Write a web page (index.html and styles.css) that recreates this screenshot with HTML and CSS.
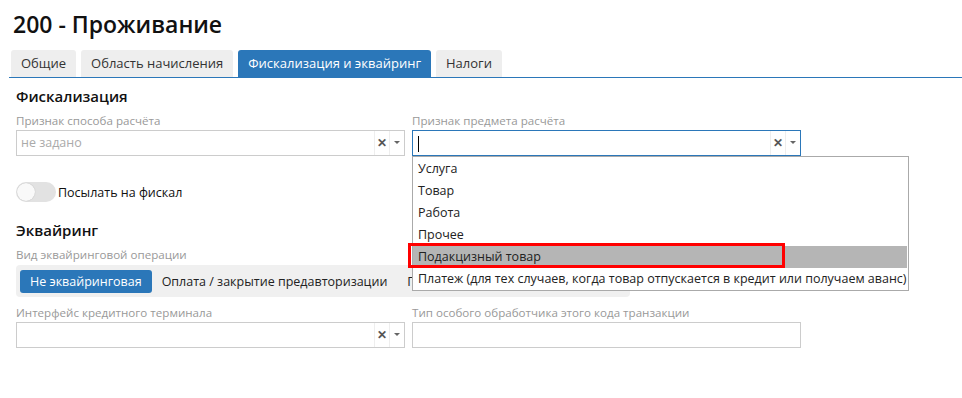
FILE: index.html
```html
<!DOCTYPE html>
<html lang="ru">
<head>
    <meta charset="UTF-8">
    <title>200 - Проживание</title>
    <link rel="stylesheet" href="styles.css">
</head>
<body>
    <div class="page">
        <h1 class="title">200 - Проживание</h1>

        <ul class="tabs">
            <li class="tab">Общие</li>
            <li class="tab">Область начисления</li>
            <li class="tab active">Фискализация и эквайринг</li>
            <li class="tab">Налоги</li>
        </ul>

        <div class="content">
            <h2 class="section-title">Фискализация</h2>
            <div class="form-row">
                <div class="field">
                    <label class="field-label">Признак способа расчёта</label>
                    <div class="combo">
                        <span class="combo-value placeholder">не задано</span>
                        <span class="combo-clear">&#x2715;</span>
                        <span class="combo-arrow"></span>
                    </div>
                </div>
                <div class="field dropdown-host">
                    <label class="field-label">Признак предмета расчёта</label>
                    <div class="combo focused">
                        <span class="combo-value"><span class="caret"></span></span>
                        <span class="combo-clear">&#x2715;</span>
                        <span class="combo-arrow"></span>
                    </div>
                    <ul class="dropdown">
                        <li>Услуга</li>
                        <li>Товар</li>
                        <li>Работа</li>
                        <li>Прочее</li>
                        <li class="hover">Подакцизный товар</li>
                        <li>Платеж (для тех случаев, когда товар отпускается в кредит или получаем аванс)</li>
                    </ul>
                    <div class="mark"></div>
                </div>
            </div>

            <div class="switch-row">
                <span class="switch"><span class="knob"></span></span>
                <span class="switch-text">Посылать на фискал</span>
            </div>

            <h2 class="section-title acq">Эквайринг</h2>
            <label class="field-label">Вид эквайринговой операции</label>
            <div class="segments">
                <span class="segment active">Не эквайринговая</span>
                <span class="segment">Оплата / закрытие предавторизации</span>
                <span class="segment">Предавторизация</span>
            </div>

            <div class="form-row terminal-row">
                <div class="field">
                    <label class="field-label">Интерфейс кредитного терминала</label>
                    <div class="combo">
                        <span class="combo-value"></span>
                        <span class="combo-clear">&#x2715;</span>
                        <span class="combo-arrow"></span>
                    </div>
                </div>
                <div class="field">
                    <label class="field-label">Тип особого обработчика этого кода транзакции</label>
                    <div class="text-input"></div>
                </div>
            </div>
        </div>
    </div>
</body>
</html>
```

FILE: styles.css
```css
* {
    box-sizing: border-box;
    margin: 0;
    padding: 0;
}

body {
    font-family: 'Open Sans', 'Noto Sans', sans-serif;
    background-color: #ffffff;
    color: #222222;
    font-size: 12.5px;
}

.page {
    padding-top: 9px;
}

.title {
    font-size: 23px;
    font-weight: 600;
    line-height: 30px;
    margin-left: 13px;
    color: #111111;
}

.tabs {
    list-style: none;
    display: flex;
    gap: 5px;
    margin: 11px 0 0 9px;
    padding-left: 2px;
    border-bottom: 1px solid #2b77b9;
}

.tab {
    height: 27px;
    line-height: 27px;
    padding: 0 10px;
    background-color: #eeeeee;
    border-radius: 3px 3px 0 0;
    font-size: 13px;
    color: #333333;
}

.tab.active {
    background-color: #2b77b9;
    color: #ffffff;
}

.content {
    padding: 0 0 0 16px;
}

.section-title {
    font-size: 15px;
    font-weight: 600;
    line-height: 20px;
    margin-top: 8px;
    color: #111111;
}

.section-title.acq {
    margin-top: 18px;
}

.form-row {
    display: flex;
    gap: 7px;
}

.terminal-row {
    margin-top: 1px;
}

.field {
    width: 389px;
}

.field-label {
    display: block;
    font-size: 11.6px;
    line-height: 16px;
    color: #999999;
    margin-top: 7px;
    margin-bottom: 1px;
}

.combo {
    display: flex;
    height: 26px;
    border: 1px solid #cccccc;
    background-color: #ffffff;
}

.combo.focused {
    border-color: #2b77b9;
}

.combo-value {
    flex: 1;
    padding-left: 4px;
    line-height: 24px;
    font-size: 12.5px;
    color: #222222;
}

.combo-value.placeholder {
    color: #aaaaaa;
}

.caret {
    display: inline-block;
    width: 1px;
    height: 16px;
    background-color: #000000;
    vertical-align: middle;
    margin-left: 1px;
}

.combo-clear {
    width: 15px;
    border-left: 1px solid #eeeeee;
    text-align: center;
    line-height: 24px;
    font-size: 12px;
    font-weight: 700;
    color: #555555;
}

.combo-arrow {
    width: 15px;
    border-left: 1px solid #eeeeee;
    position: relative;
}

.combo-arrow::after {
    content: "";
    position: absolute;
    left: 4px;
    top: 10px;
    border-left: 3px solid transparent;
    border-right: 3px solid transparent;
    border-top: 3px solid #666666;
}

.text-input {
    height: 26px;
    border: 1px solid #cccccc;
}

.dropdown-host {
    position: relative;
}

.dropdown {
    position: absolute;
    left: 0;
    top: 50px;
    width: 497px;
    list-style: none;
    background-color: #ffffff;
    border: 1px solid #aaaaaa;
    padding: 1px 0 0;
    z-index: 5;
}

.dropdown li {
    height: 22px;
    line-height: 22px;
    padding-left: 5px;
    font-size: 12.5px;
    color: #222222;
    white-space: nowrap;
}

.dropdown li.hover {
    background-color: #b5b5b5;
    margin-right: 1px;
}

.mark {
    position: absolute;
    left: -4px;
    top: 137px;
    width: 377px;
    height: 25px;
    border: 3px solid #ff0000;
    z-index: 6;
}

.switch-row {
    display: flex;
    align-items: center;
    margin-top: 26px;
    height: 20px;
}

.switch {
    width: 40px;
    height: 20px;
    border-radius: 10px;
    background-color: #e2e2e2;
    padding: 1px;
    margin-right: 2px;
}

.knob {
    display: block;
    width: 18px;
    height: 18px;
    border-radius: 50%;
    background-color: #f9f9f9;
    box-shadow: 0 0 1px rgba(0, 0, 0, 0.25);
}

.switch-text {
    font-size: 12.5px;
    color: #111111;
}

.segments {
    display: flex;
    align-items: center;
    height: 32px;
    padding: 0 4px;
    margin-top: 2px;
    background-color: #f0f0f0;
    border-radius: 4px;
    width: 614px;
    overflow: hidden;
}

.segment {
    font-size: 12.5px;
    color: #222222;
    line-height: 23px;
    padding: 0 10px;
    white-space: nowrap;
}

.segment.active {
    background-color: #2b77b9;
    color: #ffffff;
    border-radius: 3px;
}
```
